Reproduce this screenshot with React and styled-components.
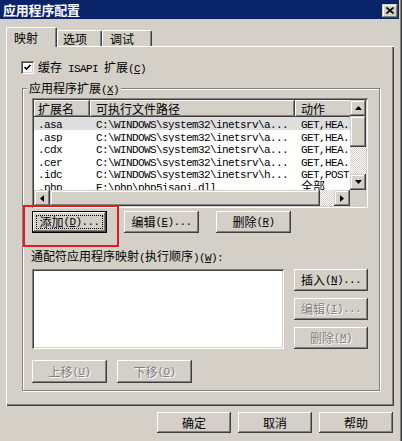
import React from "react";
import styled, { createGlobalStyle, css } from "styled-components";

const FACE = "#d4d0c8";

const GlobalStyle = createGlobalStyle`
  * { box-sizing: border-box; }
  html, body { margin: 0; padding: 0; background: ${FACE}; }
  body {
    font-family: "Noto Sans CJK SC", "Liberation Sans", sans-serif;
    font-size: 12px;
    line-height: 14px;
    color: #000;
  }
`;

const raised = css`
  box-shadow: inset -1px -1px #404040, inset 1px 1px #fff, inset -2px -2px #808080, inset 2px 2px ${FACE};
`;
const raisedScroll = css`
  box-shadow: inset -1px -1px #404040, inset 1px 1px ${FACE}, inset -2px -2px #808080, inset 2px 2px #fff;
`;
const sunken = css`
  box-shadow: inset 1px 1px #808080, inset -1px -1px #fff, inset 2px 2px #404040, inset -2px -2px ${FACE};
`;
const hatch = css`
  background: conic-gradient(#fff 25%, ${FACE} 0 50%, #fff 0 75%, ${FACE} 0) 0 0 / 2px 2px;
`;

const Han = styled.span`
  font-family: "Noto Sans CJK SC", sans-serif;
  font-size: 12px;
`;
const Lat = styled.span`
  font-family: "Liberation Mono", "DejaVu Sans Mono", monospace;
  font-size: 11px;
  letter-spacing: -0.6px;
  white-space: pre;
`;
const Acc = styled.span`
  text-decoration: underline;
  text-underline-offset: 1px;
`;

const isHan = (ch) => /[\u2e80-\u9fff\uf900-\ufaff\uff00-\uffef\u3000-\u303f]/.test(ch);

function Txt({ children }) {
  const s = String(children);
  const parts = [];
  let buf = "";
  let kind = null;
  const flush = () => {
    if (!buf) return;
    parts.push(
      kind === "h" ? <Han key={parts.length}>{buf}</Han> : <Lat key={parts.length}>{buf}</Lat>
    );
    buf = "";
  };
  for (let i = 0; i < s.length; i++) {
    const ch = s[i];
    if (ch === "&" && i + 1 < s.length) {
      flush();
      parts.push(
        <Lat key={parts.length}>
          <Acc>{s[i + 1]}</Acc>
        </Lat>
      );
      i++;
      kind = null;
      continue;
    }
    const k = isHan(ch) ? "h" : "l";
    if (k !== kind) {
      flush();
      kind = k;
    }
    buf += ch;
  }
  flush();
  return <>{parts}</>;
}

/* ---------- window chrome ---------- */
const Window = styled.div`
  width: 402px;
  height: 441px;
  background: ${FACE};
  box-shadow: inset -1px 0 #404040, inset -2px 0 #808080;
  display: flex;
  flex-direction: column;
  overflow: hidden;
`;
const TitleBar = styled.div`
  height: 19px;
  margin-right: 3px;
  background: #0a246a;
  display: flex;
  align-items: center;
  justify-content: space-between;
  padding: 0 1px 0 3px;
`;
const Title = styled.div`
  color: #fff;
  font-weight: 700;
  font-size: 13px;
  letter-spacing: -0.2px;
  line-height: 19px;
`;
const CloseBtn = styled.div`
  width: 16px;
  height: 14px;
  margin-top: 2px;
  background: ${FACE};
  ${raisedScroll}
  display: flex;
  align-items: center;
  justify-content: center;
`;
const Body = styled.div`
  padding: 8px 8px 0 6px;
  display: flex;
  flex-direction: column;
`;

/* ---------- tabs ---------- */
const TabStrip = styled.div`
  height: 19px;
  display: flex;
  align-items: flex-end;
  position: relative;
  z-index: 1;
`;
const Tab = styled.div`
  width: ${(p) => p.$w}px;
  height: ${(p) => (p.$active ? 20 : 16)}px;
  margin-bottom: ${(p) => (p.$active ? -1 : 0)}px;
  padding-left: ${(p) => p.$pl}px;
  padding-top: ${(p) => (p.$active ? 0 : 1)}px;
  background: ${FACE};
  border-top: 1px solid #fff;
  border-left: 1px solid #fff;
  border-right: 1px solid #404040;
  box-shadow: inset -1px 0 #808080;
  border-radius: 2px 2px 0 0;
  display: flex;
  align-items: center;
  position: relative;
  z-index: ${(p) => (p.$active ? 2 : 1)};
`;
const Panel = styled.div`
  height: 360px;
  padding: 15px 0 0 15px;
  box-shadow: inset 1px 1px #fff, inset -1px -1px #404040, inset -2px -2px #808080;
  display: flex;
  flex-direction: column;
`;

/* ---------- checkbox ---------- */
const CheckRow = styled.div`
  height: 13px;
  display: flex;
  align-items: center;
  gap: 4px;
`;
const CheckBox = styled.div`
  width: 13px;
  height: 13px;
  background: #fff;
  ${sunken}
  display: flex;
  align-items: center;
  justify-content: center;
`;

/* ---------- group box ---------- */
const Group = styled.div`
  width: 358px;
  height: 303px;
  margin: 14px 0 0 1px;
  padding: 9px 0 0 9px;
  border: 1px solid #808080;
  box-shadow: inset 1px 1px #fff, 1px 1px 0 #fff;
  position: relative;
  display: flex;
  flex-direction: column;
`;
const Legend = styled.div`
  position: absolute;
  left: 4px;
  top: -8px;
  padding: 0 2px;
  background: ${FACE};
  line-height: 14px;
`;

/* ---------- list view ---------- */
const ListView = styled.div`
  width: 336px;
  height: 110px;
  flex-shrink: 0;
  background: #fff;
  ${sunken}
  padding: 2px;
  display: flex;
`;
const LVMain = styled.div`
  flex: 1;
  min-width: 0;
  display: flex;
  flex-direction: column;
  overflow: hidden;
`;
const HeaderRow = styled.div`
  flex: 0 0 17px;
  display: flex;
  background: ${FACE};
`;
const HeaderCell = styled.div`
  flex: 0 0 ${(p) => p.$w}px;
  padding-left: ${(p) => p.$pl}px;
  box-shadow: inset -1px -1px #404040, inset 1px 1px #fff, inset -2px -2px #808080;
  display: flex;
  align-items: center;
  white-space: nowrap;
  overflow: hidden;
  line-height: 14px;
`;
const Rows = styled.div`
  flex: 1;
  overflow: hidden;
`;
const Row = styled.div`
  height: 12.6px;
  display: flex;
  background: ${(p) => (p.$sel ? "#dedede" : "#fff")};
`;
const Cell = styled.div`
  flex: 0 0 ${(p) => p.$w}px;
  padding-left: ${(p) => p.$pl}px;
  line-height: 12.6px;
  white-space: nowrap;
  overflow: hidden;
`;
const HScroll = styled.div`
  flex: 0 0 16px;
  display: flex;
`;
const ScrollBtn = styled.div`
  flex: 0 0 16px;
  height: 16px;
  background: ${FACE};
  ${raisedScroll}
  display: flex;
  align-items: center;
  justify-content: center;
`;
const HTrack = styled.div`
  flex: 1;
  display: flex;
  ${hatch}
`;
const HThumb = styled.div`
  width: ${(p) => p.$len}px;
  background: ${FACE};
  ${raisedScroll}
`;
const VCol = styled.div`
  flex: 0 0 16px;
  display: flex;
  flex-direction: column;
`;
const VTrack = styled.div`
  flex: 1;
  display: flex;
  flex-direction: column;
  ${hatch}
`;
const VThumb = styled.div`
  height: ${(p) => p.$len}px;
  background: ${FACE};
  ${raisedScroll}
`;
const Corner = styled.div`
  flex: 0 0 16px;
  background: ${FACE};
`;

/* ---------- buttons ---------- */
const Btn = styled.button`
  all: unset;
  box-sizing: border-box;
  width: ${(p) => p.$w ?? 75}px;
  height: ${(p) => p.$h ?? 22}px;
  flex-shrink: 0;
  display: flex;
  align-items: center;
  justify-content: center;
  background: ${FACE};
  ${raised}
  color: ${(p) => (p.$off ? "#808080" : "#000")};
  text-shadow: ${(p) => (p.$off ? "1px 1px 0 #fff" : "none")};
  position: relative;
  line-height: 14px;
  white-space: nowrap;
  ${(p) =>
    p.$focus &&
    css`
      border: 1px solid #000;
      &::after {
        content: "";
        position: absolute;
        inset: 3px;
        border: 1px dotted #000;
      }
    `}
`;
const BtnRow = styled.div`
  display: flex;
  gap: ${(p) => p.$gap}px;
  margin-top: ${(p) => p.$mt}px;
`;
const Hilite = styled.div`
  position: relative;
  display: flex;
  &::before {
    content: "";
    position: absolute;
    left: -9px;
    top: -6px;
    width: 92px;
    height: 38px;
    border: 2px solid #e01b24;
    pointer-events: none;
  }
`;
const Label = styled.div`
  margin: 16px 0 0 -1px;
  line-height: 14px;
`;
const WildRow = styled.div`
  display: flex;
  margin-top: 4px;
`;
const ListBox = styled.div`
  width: 252px;
  height: 80px;
  background: #fff;
  ${sunken}
`;
const SideCol = styled.div`
  margin-left: 10px;
  display: flex;
  flex-direction: column;
  gap: 7px;
`;
const Footer = styled.div`
  display: flex;
  justify-content: flex-end;
  gap: 7px;
  margin-top: 6px;
  padding-right: 1px;
`;

/* ---------- icons ---------- */
const Arrow = ({ dir }) => {
  const horiz = dir === "left" || dir === "right";
  const w = horiz ? 4 : 7;
  const h = horiz ? 7 : 4;
  const pts = {
    up: "3.5,0 7,4 0,4",
    down: "0,0 7,0 3.5,4",
    left: "4,0 4,7 0,3.5",
    right: "0,0 0,7 4,3.5",
  }[dir];
  return (
    <svg width={w} height={h} viewBox={`0 0 ${w} ${h}`}>
      <polygon points={pts} fill="#000" />
    </svg>
  );
};

const CloseX = () => (
  <svg width="8" height="7" viewBox="0 0 8 7">
    <path d="M0.5 0.5 L7.5 6.5 M7.5 0.5 L0.5 6.5" stroke="#000" strokeWidth="1.6" />
  </svg>
);

const Check = () => (
  <svg width="9" height="9" viewBox="0 0 9 9">
    <path d="M1.5 4 L3.5 6 L7.5 2" stroke="#000" strokeWidth="1.7" fill="none" />
  </svg>
);

/* ---------- data ---------- */
const COLS = [
  { w: 56, pl: 4 },
  { w: 205, pl: 6 },
  { w: 80, pl: 6 },
];
const HEAD = ["扩展名", "可执行文件路径", "动作"];
const ROWS = [
  [".asa", "C:\\WINDOWS\\system32\\inetsrv\\a...", "GET,HEA..."],
  [".asp", "C:\\WINDOWS\\system32\\inetsrv\\a...", "GET,HEA..."],
  [".cdx", "C:\\WINDOWS\\system32\\inetsrv\\a...", "GET,HEA..."],
  [".cer", "C:\\WINDOWS\\system32\\inetsrv\\a...", "GET,HEA..."],
  [".idc", "C:\\WINDOWS\\system32\\inetsrv\\h...", "GET,POST"],
  [".php", "E:\\php\\php5isapi.dll", "全部"],
];

export default function App() {
  return (
    <>
      <GlobalStyle />
      <Window>
        <TitleBar>
          <Title>应用程序配置</Title>
          <CloseBtn>
            <CloseX />
          </CloseBtn>
        </TitleBar>
        <Body>
          <TabStrip>
            <Tab $w={51} $pl={7} $active>
              <Txt>映射</Txt>
            </Tab>
            <Tab $w={45} $pl={5}>
              <Txt>选项</Txt>
            </Tab>
            <Tab $w={50} $pl={7}>
              <Txt>调试</Txt>
            </Tab>
          </TabStrip>
          <Panel>
            <CheckRow>
              <CheckBox>
                <Check />
              </CheckBox>
              <span>
                <Txt>缓存 ISAPI 扩展(&C)</Txt>
              </span>
            </CheckRow>
            <Group>
              <Legend>
                <Txt>应用程序扩展(&X)</Txt>
              </Legend>
              <ListView>
                <LVMain>
                  <HeaderRow>
                    {HEAD.map((h, i) => (
                      <HeaderCell key={h} $w={COLS[i].w} $pl={COLS[i].pl}>
                        <Txt>{h}</Txt>
                      </HeaderCell>
                    ))}
                  </HeaderRow>
                  <Rows>
                    {ROWS.map((r, ri) => (
                      <Row key={ri} $sel={ri === 0}>
                        {r.map((c, ci) => (
                          <Cell key={ci} $w={COLS[ci].w} $pl={COLS[ci].pl}>
                            <Txt>{c}</Txt>
                          </Cell>
                        ))}
                      </Row>
                    ))}
                  </Rows>
                  <HScroll>
                    <ScrollBtn>
                      <Arrow dir="left" />
                    </ScrollBtn>
                    <HTrack>
                      <HThumb $len={270} />
                    </HTrack>
                    <ScrollBtn>
                      <Arrow dir="right" />
                    </ScrollBtn>
                  </HScroll>
                </LVMain>
                <VCol>
                  <ScrollBtn>
                    <Arrow dir="up" />
                  </ScrollBtn>
                  <VTrack>
                    <VThumb $len={31} />
                  </VTrack>
                  <ScrollBtn>
                    <Arrow dir="down" />
                  </ScrollBtn>
                  <Corner />
                </VCol>
              </ListView>

              <BtnRow $gap={17} $mt={3}>
                <Hilite>
                  <Btn $focus>
                    <Txt>添加(&D)...</Txt>
                  </Btn>
                </Hilite>
                <Btn>
                  <Txt>编辑(&E)...</Txt>
                </Btn>
                <Btn>
                  <Txt>删除(&R)</Txt>
                </Btn>
              </BtnRow>

              <Label>
                <Txt>通配符应用程序映射(执行顺序)(&W):</Txt>
              </Label>

              <WildRow>
                <ListBox />
                <SideCol>
                  <Btn $w={74}>
                    <Txt>插入(&N)...</Txt>
                  </Btn>
                  <Btn $w={74} $off>
                    <Txt>编辑(&I)...</Txt>
                  </Btn>
                  <Btn $w={74} $off>
                    <Txt>删除(&M)</Txt>
                  </Btn>
                </SideCol>
              </WildRow>

              <BtnRow $gap={10} $mt={11}>
                <Btn $h={23} $off>
                  <Txt>上移(&U)</Txt>
                </Btn>
                <Btn $h={23} $off>
                  <Txt>下移(&O)</Txt>
                </Btn>
              </BtnRow>
            </Group>
          </Panel>
          <Footer>
            <Btn $w={74} $h={21}>
              <Txt>确定</Txt>
            </Btn>
            <Btn $w={74} $h={21}>
              <Txt>取消</Txt>
            </Btn>
            <Btn $w={74} $h={21}>
              <Txt>帮助</Txt>
            </Btn>
          </Footer>
        </Body>
      </Window>
    </>
  );
}
